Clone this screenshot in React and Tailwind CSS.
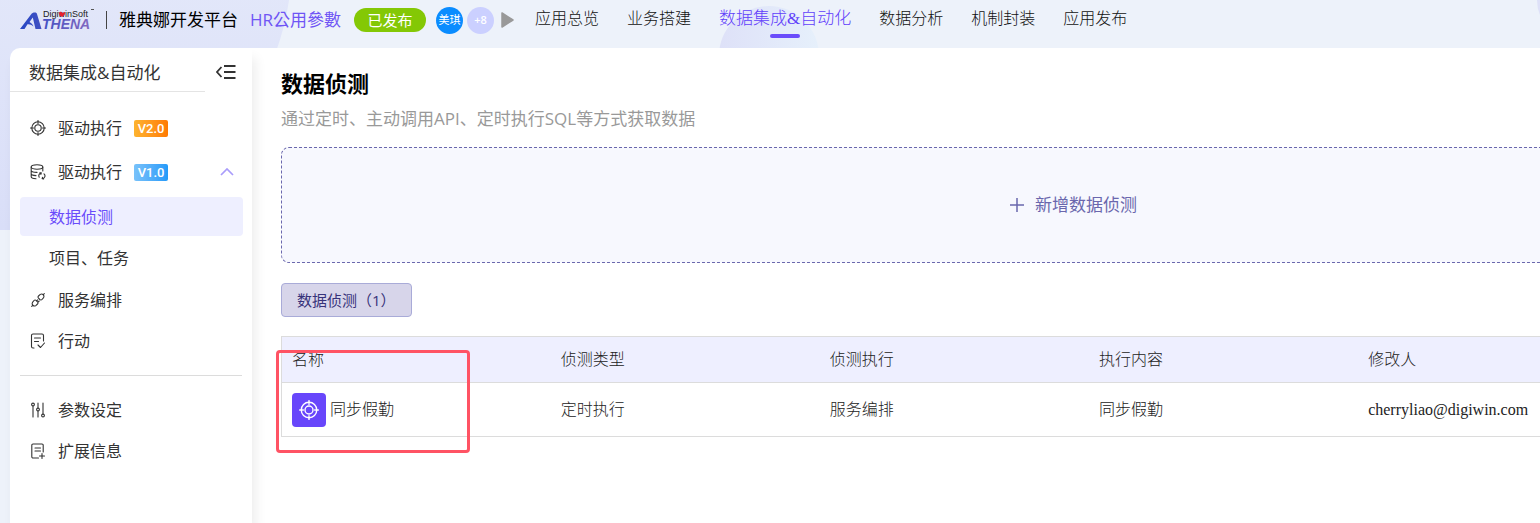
import React, { useState } from "react";

const navItems = ["应用总览", "业务搭建", "数据集成&自动化", "数据分析", "机制封装", "应用发布"];

const columns = ["名称", "侦测类型", "侦测执行", "执行内容", "修改人", ""];

const rows = [
  {
    name: "同步假勤",
    type: "定时执行",
    action: "服务编排",
    content: "同步假勤",
    editor: "cherryliao@digiwin.com",
  },
];

function Logo() {
  return (
    <svg width="76" height="24" viewBox="0 0 76 24" aria-label="DigiwinSoft Athena">
      <defs>
        <linearGradient id="logo" x1="0" y1="0" x2="76" y2="0" gradientUnits="userSpaceOnUse">
          <stop offset="0" stopColor="#2546c4" />
          <stop offset="1" stopColor="#8b6cc0" />
        </linearGradient>
      </defs>
      <path
        d="M0 21 11 6.500C12 5 13 4.500 15 4.500c1.200 0 1.700.5 2 1.500l4.500 15h-6L12.800 9.500 9.500 14c2 1 3.500 3 4 4.500-2-1.800-4-2.500-6-2.200L4.500 21z"
        fill="url(#logo)"
      />
      <text
        x="22"
        y="21"
        fontSize="14"
        fontWeight="700"
        fontStyle="italic"
        fontFamily="Liberation Sans, sans-serif"
        fill="url(#logo)"
      >
        THENA
      </text>
      <text x="23" y="9" fontSize="9" fontFamily="Liberation Sans, sans-serif" fill="#222">
        DigiwinSoft
      </text>
      <path d="M39 5c1-2 3-1 3 0 1-1 3-1 3 0 0 2-2 3-3 4-2-1-3-2-3-4z" fill="#e5202e" />
      <path d="M71 1.500h3" stroke="#555" strokeWidth="1" />
    </svg>
  );
}

function Icon({ size = 16, children }) {
  return (
    <svg
      width={size}
      height={size}
      viewBox="0 0 16 16"
      fill="none"
      stroke="currentColor"
      strokeWidth="1.1"
      strokeLinecap="round"
      strokeLinejoin="round"
      className="shrink-0"
      aria-hidden="true"
    >
      {children}
    </svg>
  );
}

function TargetIcon({ size }) {
  return (
    <Icon size={size}>
      <circle cx="8" cy="8" r="6.200" />
      <circle cx="8" cy="8" r="3.200" />
      <path d="M8 .5v3M8 12.500v3M.5 8h3M12.500 8h3" />
    </Icon>
  );
}

function DatabaseIcon() {
  return (
    <Icon>
      <ellipse cx="7" cy="3" rx="5.800" ry="2.200" />
      <path d="M1.200 3v9.800c0 1.200 2 1.900 4.800 2M12.800 3v4M1.200 6.500c0 1.200 3 2 5.800 1.900M1.200 9.800c0 1 2 1.700 4.800 1.800" />
      <path d="M9.200 13.200a2.800 2.800 0 0 1 2-4.200M14 9.800a2.800 2.800 0 0 1-1.800 4.900M9.800 8.800l1.500.1-.4 1.500M13.600 14.900l-1.500-.1.4-1.500" />
    </Icon>
  );
}

function LinkIcon() {
  return (
    <Icon>
      <path d="m8.500 4 1.800-1.600a2.400 2.400 0 0 1 3.300 3.300L12 7.500a1.500 1.500 0 0 1-2.200 0L8.500 6.200a1.500 1.500 0 0 1 0-2.200zM13.300 2.700l1-1" />
      <path d="m4 8.500-1.500 1.800a2.400 2.400 0 0 0 3.300 3.300L7.500 12a1.500 1.500 0 0 0 0-2.200L6.200 8.500a1.500 1.500 0 0 0-2.200 0zM2.700 13.300l-1 1M6.500 9l1.200-1.200M8 10.200 9.200 9" />
    </Icon>
  );
}

function TaskIcon() {
  return (
    <Icon>
      <path d="M4 15H3a1.500 1.500 0 0 1-1.500-1.500v-11A1.500 1.500 0 0 1 3 1h9a1.500 1.500 0 0 1 1.500 1.500V8M4.500 5h6M4.500 8.500h4M8 12l2.500 2.500L14.500 10" />
    </Icon>
  );
}

function SlidersIcon() {
  return (
    <Icon>
      <circle cx="3" cy="2.500" r="1.400" />
      <path d="M3 4v11M8 1v5M8 9v6M13 1v11" />
      <circle cx="8" cy="7.500" r="1.400" />
      <circle cx="13" cy="13.500" r="1.400" />
    </Icon>
  );
}

function NotesIcon() {
  return (
    <Icon>
      <path d="M8.500 15H3a1.200 1.200 0 0 1-1.200-1.200V2.200A1.200 1.200 0 0 1 3 1h9a1.200 1.200 0 0 1 1.200 1.200V9M5 5h5.500M5 8h5.500M12 10.500v5M9.500 13h5" />
    </Icon>
  );
}

function MenuRow({ icon, label, badge, badgeClass, tall, open, onClick }) {
  return (
    <button
      type="button"
      onClick={onClick}
      className={`flex w-full items-center pr-[18px] pl-5 text-base text-[#333] ${tall ? "h-11" : "h-[41px]"}`}
    >
      {icon}
      <span className="ml-3">{label}</span>
      {badge && (
        <span
          className={`ml-3 h-[17px] w-[34px] rounded-xs bg-linear-to-r text-center font-['Roboto',sans-serif] text-[13px] leading-[17px] font-medium text-white ${badgeClass}`}
        >
          {badge}
        </span>
      )}
      {open !== undefined && (
        <svg
          width="14"
          height="8"
          viewBox="0 0 14 8"
          fill="none"
          stroke="#a99cfb"
          strokeWidth="1.700"
          className={`ml-auto ${open ? "" : "rotate-180"}`}
        >
          <path d="m1 7 6-6 6 6" />
        </svg>
      )}
    </button>
  );
}

export default function App() {
  const [open, setOpen] = useState(true);
  const [active, setActive] = useState(2);

  return (
    <div className="relative isolate flex min-h-screen flex-col overflow-hidden bg-[#edf2fa] font-['Open_Sans','Noto_Sans_CJK_SC',sans-serif] text-[#333]">
      {/* Background bubbles */}
      <div className="absolute -top-[310px] -left-[290px] -z-10 h-[540px] w-[582px] rounded-full bg-linear-to-b from-[#eef2fb] to-[#d9def8]" />
      <div className="absolute top-1.5 left-[719px] -z-10 size-[100px] rounded-full bg-linear-to-r from-[#dee1f8] to-[#e6f0fb]" />
      <div className="absolute -top-10 left-[1537px] -z-10 size-20 rounded-full bg-[#dee1f8]" />

      {/* Top bar */}
      <header className="flex h-12 shrink-0 items-start pl-5 whitespace-nowrap">
        <div className="flex h-10 items-center">
          <Logo />
          <span className="ml-2.5 h-[18px] w-px bg-[#444]" />
          <span className="ml-3 text-[17px] text-black">雅典娜开发平台</span>
          <span className="ml-3 font-['Open_Sans','Noto_Sans_CJK_TC',sans-serif] text-[17px] text-[#6f55f5]">
            HR公用參數
          </span>
          <span className="ml-[13px] flex h-6 w-[72px] items-center justify-center rounded-full bg-[#84c805] text-[15px] text-white">
            已发布
          </span>
          <span className="ml-2.5 flex size-[27px] items-center justify-center rounded-full bg-[#0a8cff] text-[11px] text-white">
            美琪
          </span>
          <span className="ml-1 flex size-[27px] items-center justify-center rounded-full bg-[#cbd0ff] text-[11px] font-semibold text-white">
            +8
          </span>
          <svg width="13" height="16" viewBox="0 0 13 16" className="ml-[7px]" aria-hidden="true">
            <path d="M1 1v14l11-7z" fill="#999" stroke="#999" strokeWidth="1.500" strokeLinejoin="round" />
          </svg>
        </div>
        <nav className="ml-[21px] flex h-[38px] items-center gap-7 font-['Liberation_Serif','Noto_Sans_CJK_SC',serif] font-light">
          {navItems.map((label, i) => (
            <a
              key={label}
              href="#"
              onClick={() => setActive(i)}
              className={
                i === active
                  ? "relative text-[17px] text-[#6140fb]"
                  : "text-base text-[#111]"
              }
            >
              {label}
              {i === active && (
                <span className="absolute -bottom-1.5 left-1/2 h-1 w-[30px] -translate-x-1/2 rounded-full bg-[#6a4cfb]" />
              )}
            </a>
          ))}
        </nav>
      </header>

      <div className="flex flex-1 pl-2.5">
        {/* Sidebar */}
        <aside className="relative z-10 w-[242px] shrink-0 rounded-tl-[10px] bg-white shadow-[4px_10px_12px_rgba(0,0,0,0.07)]">
          <div className="flex h-11">
            <h2 className="flex w-[195px] items-center border-b border-[#e4e4e4] pt-1.5 pl-[19px] text-[17px]">
              数据集成&amp;自动化
            </h2>
            <button type="button" aria-label="收起" className="flex w-[42px] items-center justify-center pt-1">
              <svg width="20" height="16" viewBox="0 0 20 16" fill="none" stroke="#333" strokeWidth="1.800">
                <path d="M8 2h11.500M8 8h11.500M8 14h11.500M5.500 3 1 8l4.500 5" />
              </svg>
            </button>
          </div>

          <div className="pt-3.5">
            <MenuRow
              tall
              icon={<TargetIcon />}
              label="驱动执行"
              badge="V2.0"
              badgeClass="from-[#fdb32f] to-[#ff7a00]"
            />
            <MenuRow
              tall
              icon={<DatabaseIcon />}
              label="驱动执行"
              badge="V1.0"
              badgeClass="from-[#78c2fa] to-[#219af9]"
              open={open}
              onClick={() => setOpen(!open)}
            />
            {open && (
              <div className="mt-[3px] mr-[9px] mb-0.5 ml-2.5 flex flex-col gap-0.5">
                <a href="#" className="flex h-[39px] items-center rounded-sm bg-[#eeefff] pl-[29px] text-[#6a4cfb]">
                  数据侦测
                </a>
                <a href="#" className="flex h-[39px] items-center rounded-sm pl-[29px]">
                  项目、任务
                </a>
              </div>
            )}
            <MenuRow icon={<LinkIcon />} label="服务编排" />
            <MenuRow icon={<TaskIcon />} label="行动" />
            <hr className="mx-2.5 mt-3.5 mb-[13px] border-[#dcdcdc]" />
            <MenuRow icon={<SlidersIcon />} label="参数设定" />
            <MenuRow icon={<NotesIcon />} label="扩展信息" />
          </div>
        </aside>

        {/* Content */}
        <main className="min-w-0 flex-1 overflow-hidden bg-white pt-[19px] pl-[29px]">
          <div className="w-[1584px]">
            <h1 className="text-[22px] leading-8 font-bold text-black">数据侦测</h1>
            <p className="mt-2 text-[17px] leading-6 text-[#999]">
              通过定时、主动调用API、定时执行SQL等方式获取数据
            </p>

            <button
              type="button"
              className="mt-4 flex h-[116px] w-full items-center justify-center gap-2.5 rounded-lg border border-dashed border-[#6a67ad] bg-[#f7f8fe] text-[17px] text-[#6a67ad]"
            >
              <svg width="16" height="16" viewBox="0 0 16 16" stroke="currentColor" strokeWidth="1.500" aria-hidden="true">
                <path d="M8 1v14M1 8h14" />
              </svg>
              新增数据侦测
            </button>

            <button
              type="button"
              className="mt-5 flex h-[34px] items-center rounded-sm border border-[#a9abd8] bg-[#d7d5ea] px-[15px] text-[15px] text-[#37337a]"
            >
              数据侦测（1）
            </button>

            <div className="relative mt-[19px]">
              <table className="w-[1616px] table-fixed border-collapse font-['Liberation_Serif','Noto_Sans_CJK_SC',serif] text-base font-light text-[#222]">
                <thead>
                  <tr className="h-[46px] border border-[#dcdcdc] bg-[#eeefff]">
                    {columns.map((c) => (
                      <th key={c} className="pl-2.5 text-left font-light">
                        {c}
                      </th>
                    ))}
                  </tr>
                </thead>
                <tbody>
                  {rows.map((r) => (
                    <tr key={r.name} className="h-[54px] border border-[#dcdcdc]">
                      <td className="pl-2.5">
                        <div className="flex items-center gap-1">
                          <span className="flex size-[34px] items-center justify-center rounded-sm bg-[#6846fb] text-white">
                            <TargetIcon size={20} />
                          </span>
                          {r.name}
                        </div>
                      </td>
                      <td className="pl-2.5">{r.type}</td>
                      <td className="pl-2.5">{r.action}</td>
                      <td className="pl-2.5">{r.content}</td>
                      <td className="pl-2.5 font-normal">{r.editor}</td>
                      <td />
                    </tr>
                  ))}
                </tbody>
              </table>
              {/* Highlight frame */}
              <div className="pointer-events-none absolute top-3.5 -left-[5px] h-[103px] w-[194px] rounded-sm border-3 border-[#ff5364]" />
            </div>
          </div>
        </main>
      </div>
    </div>
  );
}
